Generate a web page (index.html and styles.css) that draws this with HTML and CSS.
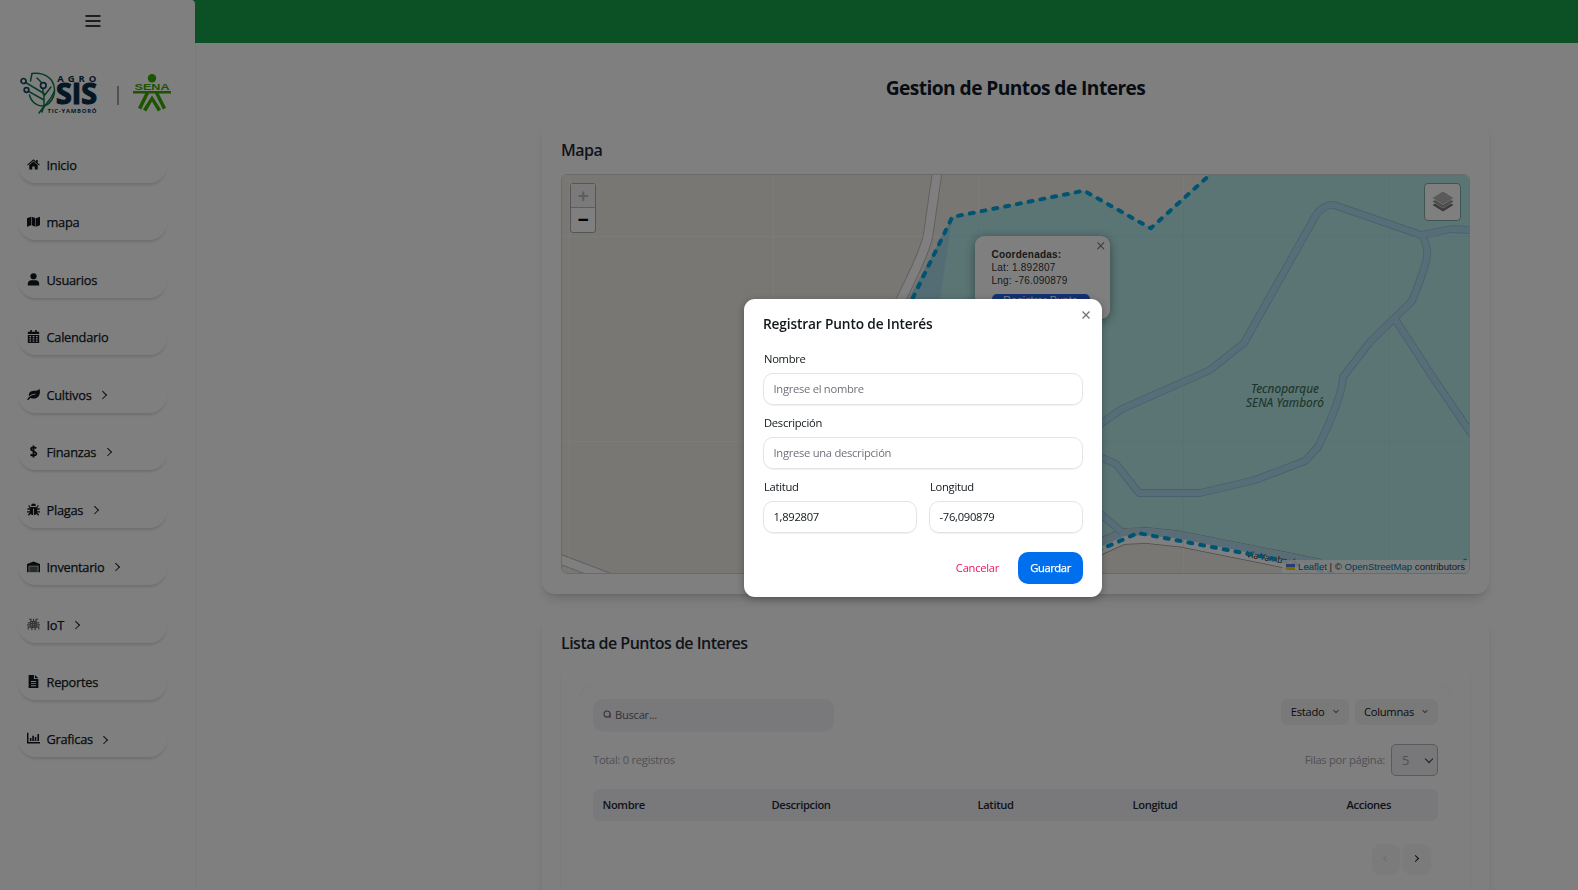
FILE: index.html
```html
<!DOCTYPE html>
<html lang="es">
<head>
<meta charset="utf-8">
<title>Gestion de Puntos de Interes</title>
<link rel="stylesheet" href="styles.css">
</head>
<body>
<div class="app">
  <aside class="sidebar">
    <svg class="burger" viewBox="0 0 16 12"><path d="M1 1h14M1 6h14M1 11h14"/></svg>
    <div class="logos">
      <svg class="logo-agro" viewBox="0 0 80 42" width="80" height="42">
        <g fill="none" stroke="#0f7a4c" stroke-width="1.5" stroke-linecap="round">
          <path d="M12 1.500C24 0 34 6 34.500 17.500C35 25 30 32 25 33.500C18 35.500 11 30 9.500 23"/>
          <path d="M12 1.500L10.500 9M34 20C30 30 24 32 22 40M25 33L19 41"/>
          <path d="M4 9.500L24 21.500V33M7 18.500L24 28M23 14V22M24 13L17 6M31 15L24 24"/>
        </g>
        <g fill="#fff" stroke="#16435a" stroke-width="1.700"><circle cx="3.500" cy="9" r="2.500"/><circle cx="6.500" cy="18" r="2.300"/><circle cx="23.300" cy="13.500" r="2.800"/></g>
        <g class="agro-text">
          <text x="37.300" y="9.500" font-size="9.500" textLength="39">AGRO</text>
          <text class="sis" x="36" y="32" font-size="28" textLength="41" lengthAdjust="spacingAndGlyphs">SIS</text>
          <text x="27.500" y="40.800" font-size="5.900" textLength="49">TIC-YAMBORÓ</text>
        </g>
      </svg>
      <span class="logo-sep"></span>
      <svg class="logo-sena" viewBox="0 0 38 38" width="38" height="38">
        <circle cx="19" cy="4.200" r="4.200"/>
        <text x="1.500" y="15.500" font-size="8.400" textLength="35" lengthAdjust="spacingAndGlyphs">SENA</text>
        <path d="M0 17h38v2.500H25.800L33 33.800 30 35.600 22 19.500H16L8.200 35.600 5 33.800 12.200 19.500H0z"/>
        <path d="M19 21.500L28 35.600 25 37.500 19 27.500 13.200 37.500 10 35.600z"/>
      </svg>
    </div>
    <nav class="menu">
      <a class="item"><svg viewBox="0 0 16 16"><path d="M8 4.200L2.800 8.500V14h3.700v-3.600h3V14h3.700V8.500zM8 1.600L.2 8.200l.9 1L8 3.400l6.900 5.800.9-1-2.600-2.200V2.500h-2v1.800z"/></svg>Inicio</a>
      <a class="item"><svg viewBox="0 0 16 16"><path d="M0 4l5-2v10.500l-5 2zM5.700 2l4.600 1.800v10.700l-4.600-1.800zM11 3.900L16 2v10.500l-5 2z"/></svg>mapa</a>
      <a class="item"><svg viewBox="0 0 16 16"><circle cx="8" cy="4" r="3.800"/><path d="M1 15.500v-2.300C1 10.500 3 9 5 9h6c2 0 4 1.500 4 4.200v2.300z"/></svg>Usuarios</a>
      <a class="item"><svg viewBox="0 0 16 16"><path fill-rule="evenodd" d="M4 0h2v2h4V0h2v2h3v3H1V2h3zM1 6h14v10H1zM3 7.500V9h2V7.500zm4 0V9h2V7.500zm4 0V9h2V7.500zM3 10.200v1.500h2v-1.500zm4 0v1.500h2v-1.500zm4 0v1.500h2v-1.500zM3 13v1.500h2V13zm4 0v1.500h2V13zm4 0v1.500h2V13z"/></svg>Calendario</a>
      <a class="item"><svg viewBox="0 0 16 16"><path fill-rule="evenodd" d="M15.300 1c1.800 5-.3 12-7 12-1.600 0-3-.4-4-1.100L1.500 15l-1.300-.8C1.700 11 5 8.300 10.500 8V7C6.500 7 4 8.500 2.300 10.300 1.700 4.300 6 3.500 9.500 3.500c3 0 4.500-.8 5.800-2.500z"/></svg>Cultivos<i class="chev"></i></a>
      <a class="item"><svg viewBox="0 0 16 16"><path class="stroke2" d="M8 .5v15M11.500 4C9.500 2.500 5 2.500 5 5.200s6.500 2.300 6.500 5.300-5 3-7.200 1.200"/></svg>Finanzas<i class="chev"></i></a>
      <a class="item"><svg viewBox="0 0 16 16"><path d="M5 3.700a3 3 0 0 1 6 0zM4 4.800h8v1.700h3.500v1.700h-3V10H16v1.600h-3.500l2.500 3-1.300 1-2.300-2.300C10.800 14.500 9.800 15 8.500 15V7h-1v8c-1.300 0-2.300-.5-2.900-1.700L2.300 15.600l-1.300-1 2.500-3H0V10h3.500V8.200h-3V6.500H4z"/><path class="stroke1" d="M4.500 6.500L2 3M11.500 6.500L14 3"/></svg>Plagas<i class="chev"></i></a>
      <a class="item"><svg viewBox="0 0 16 16"><path d="M0 5l8-3.300L16 5v10h-2V7H2v8H0z"/><path opacity=".72" d="M2.800 7.800h10.400V15H2.800z"/></svg>Inventario<i class="chev"></i></a>
      <a class="item"><svg viewBox="0 0 16 16"><g opacity=".65"><path class="stroke1" d="M5 4V1.500H2.500M8 5V1M11 4V1.500h2.500M4 6H1M4 8.500H0M4 11H1.500v3M12 6h3M12 8.500h4M12 11h2.500v3M6 12v3M10 12v3"/><path class="stroke1" d="M4.500 4.500h7v7h-7zM7 5v6M9.500 5v6M5 7h6M5 9.500h6"/></g></svg>IoT<i class="chev"></i></a>
      <a class="item"><svg viewBox="0 0 16 16"><path fill-rule="evenodd" d="M2 0h6.500v5H14v11H2zM9.800 0L14 4H9.800zM4.800 7.500v1.200h6.400V7.500zm0 2.500v1.200h6.400V10zm0 2.500v1.200h6.400v-1.200z"/></svg>Reportes</a>
      <a class="item"><svg viewBox="0 0 16 16"><path d="M0 1h1.800v11.200H16V14H0zM3.500 7.500h2V11h-2zM6.500 4.500h2V11h-2zM9.500 6h2v5h-2zM12.800 2.500h2V11h-2z"/></svg>Graficas<i class="chev"></i></a>
    </nav>
  </aside>
  <div class="page">
    <header class="topbar"></header>
    <main class="main">
      <h1>Gestion de Puntos de Interes</h1>
      <section class="card map-card">
        <h2>Mapa</h2>
        <div class="map">
          <svg class="tiles" viewBox="562 175 907 398" width="907" height="398">
            <rect x="562" y="175" width="908" height="398" fill="#f2efe9"/>
            <path d="M952.300 217L1084 190.700 1150.700 228.300 1210 173H1480V573L1380 573 1290 561 1142 533 1094 555 860 480z" fill="#b6ebeb"/>
            <path d="M952.300 217L940 300H908z" fill="#a9dbe8"/>
            <g class="casing">
              <path d="M937.500 170L928 236C922 262 900 298 880 345"/>
              <path d="M545 553.500L620 582"/>
            </g>
            <g class="road">
              <path d="M937.500 170L928 236C922 262 900 298 880 345"/>
              <path d="M545 553.500L620 582"/>
            </g>
            <path class="via-edge" d="M1060 565L1123 536.500 1147 535.500 1180 539 1320 567"/>
            <path class="via-low" d="M1060 565L1123 536.500 1147 535.500 1180 539 1320 567"/>
            <path class="via" d="M1060 561L1123 532.500 1147 531.500 1180 535 1320 563"/>
            <g class="path-casing">
              <path d="M1080 438L1122 409 1210 370 1244 343 1316 215Q1324 204 1334 205L1421 235 1452 229 1475 230.500"/>
              <path d="M1422 235Q1428 246 1427 256T1412 301L1370 342Q1360 355 1343 377 1342 398 1318 447L1305 461 1255 480 1200 493H1139L1116 464 1080 448"/>
              <path d="M1395 319L1434 379 1475 439M1080 497L1122 532"/>
            </g>
            <g class="path-road">
              <path d="M1080 438L1122 409 1210 370 1244 343 1316 215Q1324 204 1334 205L1421 235 1452 229 1475 230.500"/>
              <path d="M1422 235Q1428 246 1427 256T1412 301L1370 342Q1360 355 1343 377 1342 398 1318 447L1305 461 1255 480 1200 493H1139L1116 464 1080 448"/>
              <path d="M1395 319L1434 379 1475 439M1080 497L1122 532"/>
            </g>
            <g class="map-label">
              <text x="1285" y="393" text-anchor="middle" textLength="68">Tecnoparque</text>
              <text x="1285" y="407" text-anchor="middle" textLength="78">SENA Yamboró</text>
            </g>
            <path class="grid" d="M569.500 175V573M773.500 175V573M978.500 175V217M1183.500 175V200M1183.500 548V573M562 236.500H940M562 441.500H860"/>
            <path class="grid faint" d="M978.500 215V573M1183.500 200V548M1389.500 175V573M940 236.500H1470M860 441.500H1470"/>
            <text class="via-name" x="1246" y="557" transform="rotate(10 1246 557)">Vía Yamboró</text>
            <path class="area" d="M870 384L912.700 298.300 952.300 217 1084 190.700 1150.700 228.300 1214 171"/>
            <path class="area" d="M1097 551L1138 533 1280 560 1345 577M1462 563L1474 554"/>
          </svg>
          <div class="zoom"><span class="off">+</span><span>−</span></div>
          <div class="layers"><svg viewBox="0 0 22 22" width="22" height="22"><path fill="#777" d="M.5 14L11 20.500 21.500 14 19 12.500 11 17.500 3 12.500z"/><path fill="#999" d="M.5 10.500L11 17 21.500 10.500 19 9 11 14 3 9z"/><path fill="#b5b5b5" d="M.5 7L11 .5 21.500 7 11 13.500z"/></svg></div>
          <div class="popup">
            <svg class="x" viewBox="0 0 8 8"><path d="M.5.5l7 7M7.500.5l-7 7"/></svg>
            <b>Coordenadas:</b><span>Lat: 1.892807</span><span>Lng: -76.090879</span>
            <button>Registrar Punto</button>
          </div>
          <div class="credits"><svg viewBox="0 0 9 6" width="9" height="6"><path fill="#4c7be1" d="M0 0h9v3H0z"/><path fill="#ffd500" d="M0 3h9v3H0z"/></svg> <a>Leaflet</a> | © <a>OpenStreetMap</a> contributors</div>
        </div>
      </section>
      <section class="card list-card">
        <h2>Lista de Puntos de Interes</h2>
        <div class="inner"><div class="table-wrap">
          <div class="tools">
            <div class="search"><svg viewBox="0 0 10 10"><circle cx="4.500" cy="4.500" r="3.400"/><path d="M7.800 4.500V9"/></svg>Buscar...</div>
            <div class="drops"><span class="drop">Estado<i class="down"></i></span><span class="drop">Columnas<i class="down"></i></span></div>
          </div>
          <div class="meta"><span>Total: 0 registros</span><label>Filas por página:<span class="select">5<i class="caret"></i></span></label></div>
          <div class="thead"><span>Nombre</span><span>Descripcion</span><span>Latitud</span><span>Longitud</span><span>Acciones</span></div>
          <div class="pager"><span class="off"><i class="chev"></i></span><span><i class="chev"></i></span></div>
        </div></div>
      </section>
    </main>
  </div>
</div>
<div class="overlay">
  <form class="modal">
    <svg class="x" viewBox="0 0 8 8"><path d="M.5.5l7 7M7.500.5l-7 7"/></svg>
    <h3>Registrar Punto de Interés</h3>
    <label>Nombre</label>
    <div class="input hint">Ingrese el nombre</div>
    <label>Descripción</label>
    <div class="input hint">Ingrese una descripción</div>
    <div class="pair">
      <div><label>Latitud</label><div class="input">1,892807</div></div>
      <div><label>Longitud</label><div class="input">-76,090879</div></div>
    </div>
    <div class="actions"><span class="cancel">Cancelar</span><span class="save">Guardar</span></div>
  </form>
</div>
</body>
</html>
```
FILE: styles.css
```css
* { box-sizing: border-box; }
html { overflow: hidden; }
body { margin: 0; height: 890px; overflow: hidden; font-family: "Open Sans", "Noto Sans", sans-serif; font-size: 11.2px; letter-spacing: -.28px; color: #11181c; background: #fff; }
.app { display: flex; height: 890px; overflow: hidden; background: linear-gradient(90deg, #16a34a 0 240px, #fff 240px); background-size: 100% 43px; background-repeat: no-repeat; }
.sidebar { width: 195px; background: #fff; border-radius: 0 4px 0 0; box-shadow: 1px 0 2px rgba(0,0,0,.06); display: flex; flex-direction: column; flex-shrink: 0; }
.burger { width: 16px; height: 12px; margin: 14.500px 0 0 84.500px; stroke: #000; stroke-width: 1.400; stroke-linecap: round; fill: none; flex-shrink: 0; }
.logos { display: flex; height: 42px; margin: 45.500px 0 0 20px; letter-spacing: 0; }
.logo-agro { overflow: visible; }
.agro-text { font-family: "Open Sans", sans-serif; font-weight: 700; fill: #0b2f4a; }
.sis { stroke: #0b2f4a; stroke-width: 1.200px; }
.logo-sep { width: 1.500px; height: 19px; background: #9ca3af; margin: 14px 0 0 17px; }
.logo-sena { margin: 2px 0 0 14px; fill: #39a900; overflow: visible; font-family: "Liberation Sans", sans-serif; font-weight: 700; }
.menu { display: flex; flex-direction: column; gap: 21.450px; margin: 33px 0 0 18px; }
.item { display: flex; align-items: center; flex-shrink: 0; width: 149px; height: 36px; padding-left: 9px; border-radius: 19px; font-size: 12.800px; -webkit-text-stroke: .25px; box-shadow: 0 3px 3px -1px rgba(0,0,0,.14); letter-spacing: -.27px; }
.item svg { width: 13px; height: 13px; margin-right: 6.500px; fill: #11181c; position: relative; top: -.5px; }
.stroke2 { stroke: #11181c; stroke-width: 2.200; fill: none; }
.stroke1 { stroke: #11181c; stroke-width: 1.400; fill: none; }
.chev { width: 5.500px; height: 5.500px; border: solid #11181c; border-width: 1.200px 1.200px 0 0; transform: rotate(45deg); margin-left: 8.500px; }
.page { flex: 1; }
.topbar { height: 43px; background: #16a34a; }
.main { width: 947px; margin-left: 347px; }
h1, h2, h3 { font-weight: 600; margin: 0; color: #1f2937; }
h1 { font-size: 19.200px; line-height: 26px; font-weight: 700; text-align: center; margin-top: 32px; color: #111827; letter-spacing: -.57px; }
h2 { font-size: 16px; line-height: 22px; letter-spacing: -.52px; }
.card { border-radius: 13px; padding: 19px; background: #fff; box-shadow: 0 8px 12px -3px rgba(0,0,0,.14), 0 3px 5px -3px rgba(0,0,0,.12); }
.map-card { height: 474px; margin-top: 19px; }
.map { position: relative; width: 909px; height: 400px; margin-top: 13px; border: 1px solid #d1d5db; border-radius: 6px; overflow: hidden; font-family: "Liberation Sans", sans-serif; }
.tiles { display: block; }
.casing, .road, .via, .via-low, .via-edge, .path-casing, .path-road, .grid, .area { fill: none; stroke-linejoin: round; }
.casing { stroke: #c4bfc0; stroke-width: 10.500; }
.road { stroke: #fff; stroke-width: 8.500; }
.via-edge { stroke: #8f9a9c; stroke-width: 16.500; }
.via-low { stroke: #fff; stroke-width: 15; }
.via { stroke: #b0daea; stroke-width: 7.500; }
.path-casing { stroke: #8fc4d4; stroke-width: 7.800; }
.path-road { stroke: #afdcf0; stroke-width: 6; }
.grid { stroke: #fff; stroke-opacity: .45; }
.faint { stroke: #a9d9ee; }
.area { stroke: #00a8e4; stroke-width: 4; stroke-dasharray: 4 8; stroke-linecap: round; }
.map-label { font: italic 11.800px "Noto Sans", sans-serif; letter-spacing: 0; fill: #386c55; stroke: #386c55; stroke-width: .12px; }
.via-name { font: 9px "Noto Sans", sans-serif; fill: #333; }
.zoom { position: absolute; left: 8px; top: 8px; width: 26px; height: 50px; border: 1px solid #aaa; border-radius: 3px; background: #fff; display: grid; grid-template-rows: 1fr 1fr; text-align: center; font: bold 19px/26px "Liberation Mono", monospace; color: #000; }
.zoom span { height: 24px; }
.zoom .off { color: #bbb; border-bottom: 1px solid #bbb; background: #f4f4f4; }
.layers { position: absolute; right: 8px; top: 8px; width: 37px; height: 38px; border: 1px solid #7faaa9; border-radius: 4px; background: #fff; display: grid; place-items: center; }
.popup { position: absolute; left: 413px; top: 61px; width: 135px; height: 83px; border-radius: 9px; background: #fff; box-shadow: 0 2px 11px rgba(0,0,0,.4); padding: 11.500px 16px 12px 16.500px; display: flex; flex-direction: column; font-size: 10px; line-height: 13.400px; color: #333; letter-spacing: .22px; }
.popup .x { position: absolute; right: 5.500px; top: 6px; width: 7.500px; height: 7.500px; stroke: #757575; stroke-width: 1.200; fill: none; }
.popup button { width: 98px; height: 22px; margin-top: 6px; padding: 0; border: 0; border-radius: 5px; background: #2563eb; color: #fff; font: 10.500px/12px "Liberation Sans", sans-serif; letter-spacing: .1px; }
.credits { position: absolute; right: 0; bottom: 0; height: 13px; padding: 0 4px; background: rgba(255,255,255,.8); font-size: 9.600px; line-height: 13px; letter-spacing: 0; color: #333; white-space: nowrap; }
.credits a { color: #0078a8; }
.list-card { margin-top: 19px; height: 300px; }
.inner { margin-top: 12.500px; height: 270px; padding: 19px; box-shadow: 0 3px 3px rgba(0,0,0,.08); border-radius: 8px; }
.table-wrap { height: 215px; padding: 13px 13px 0; border-radius: 11px; box-shadow: 0 0 1px rgba(0,0,0,.15); }
.tools { display: flex; justify-content: space-between; align-items: flex-start; }
.search { width: 241px; height: 32px; border-radius: 10px; background: #f3f3f6; display: flex; align-items: center; padding: 0 0 1px 9.500px; color: #666670; box-shadow: 0 1px 1px rgba(0,0,0,.04); }
.search svg { width: 9px; height: 9px; margin-right: 3.500px; fill: none; stroke: #666670; stroke-width: 1.200; }
.drops { display: flex; gap: 6px; }
.drop { height: 26px; border-radius: 7px; background: #f2f2f5; display: flex; align-items: center; padding: 0 11px 1px 9.500px; }
.down, .caret { width: 4px; height: 4px; border: solid #71717a; border-width: 0 1px 1px 0; transform: translateY(-.5px) rotate(45deg); margin-left: 9px; }
.meta { display: flex; justify-content: space-between; align-items: center; height: 32px; margin-top: 13px; color: #a1a1aa; }
.meta label { display: flex; align-items: center; gap: 6px; }
.select { width: 47px; height: 32px; border: 1px solid #b5b5ba; border-radius: 5px; background: #f1f1f4; display: flex; align-items: center; justify-content: space-between; padding: 0 5px 0 10px; font-size: 12.800px; }
.caret { width: 6px; height: 6px; border-color: #333; border-width: 0 1.700px 1.700px 0; transform: translateY(-1px) rotate(45deg); }
.thead { display: grid; grid-template-columns: 169px 206px 155px 214px 1fr; height: 32px; margin-top: 13px; padding: 0 0 1px 9.500px; border-radius: 7px; background: #f2f2f6; align-items: center; font-weight: 600; letter-spacing: -.37px; color: #1f2937; }
.pager { display: flex; justify-content: flex-end; gap: 3px; margin: 23px 7.500px 0; }
.pager span { width: 28px; height: 30px; border-radius: 9px; background: #f7f7f8; box-shadow: 0 1px 2px rgba(0,0,0,.05); display: grid; place-items: center; }
.pager .chev { width: 5px; height: 5px; margin: 0 2px 0 0; }
.pager .off .chev { opacity: .12; transform: rotate(-135deg); margin: 0 0 0 2px; }
.overlay { position: fixed; inset: 0; background: rgba(0,0,0,.5); }
.modal { position: absolute; left: 744px; top: 299px; width: 358px; height: 298px; border-radius: 11px; background: #fff; box-shadow: 0 2px 8px rgba(0,0,0,.3); padding: 15px 19px; display: flex; flex-direction: column; }
.modal .x { position: absolute; right: 12px; top: 12px; width: 8px; height: 8px; stroke: #71717a; stroke-width: 1.300; fill: none; }
.modal h3 { font-size: 13.700px; line-height: 19px; color: #11181c; letter-spacing: -.14px; margin-bottom: 18px; }
.modal label { display: block; line-height: 16px; padding-left: 1px; margin-bottom: 6px; }
.input { height: 32px; line-height: 30px; padding: 0 9.500px; border: 1px solid #e4e4e7; border-radius: 10px; margin-bottom: 10px; box-shadow: 0 1px 1px rgba(0,0,0,.06); }
.hint { color: #71717a; }
.pair { display: grid; grid-template-columns: 1fr 1fr; gap: 12px; }
.actions { display: flex; justify-content: flex-end; gap: 19px; line-height: 32px; margin-top: 9px; }
.cancel { color: #f31260; }
.save { width: 65px; height: 32px; border-radius: 10px; background: #006fee; color: #fff; text-align: center; -webkit-text-stroke: .25px; letter-spacing: -.4px; }
```
